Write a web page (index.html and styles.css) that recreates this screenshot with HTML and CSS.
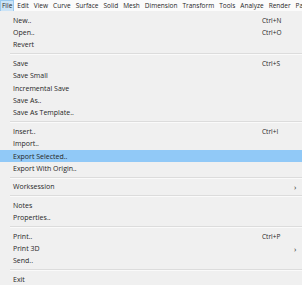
FILE: index.html
```html
<!DOCTYPE html>
<html>
<head>
  <meta charset="utf-8">
  <link rel="stylesheet" href="styles.css">
</head>
<body>
<div id="app">
  <div class="menubar">
    <span class="top active">File</span>
    <span class="top">Edit</span>
    <span class="top">View</span>
    <span class="top">Curve</span>
    <span class="top">Surface</span>
    <span class="top">Solid</span>
    <span class="top">Mesh</span>
    <span class="top">Dimension</span>
    <span class="top">Transform</span>
    <span class="top">Tools</span>
    <span class="top">Analyze</span>
    <span class="top">Render</span>
    <span class="top">Panel</span>
  </div>
  <div class="menu">
    <div class="item"><span class="label">New..</span><span class="key">Ctrl+N</span></div>
    <div class="item"><span class="label">Open..</span><span class="key">Ctrl+O</span></div>
    <div class="item"><span class="label">Revert</span></div>
    <div class="sep"></div>
    <div class="item"><span class="label">Save</span><span class="key">Ctrl+S</span></div>
    <div class="item"><span class="label">Save Small</span></div>
    <div class="item"><span class="label">Incremental Save</span></div>
    <div class="item"><span class="label">Save As..</span></div>
    <div class="item"><span class="label">Save As Template..</span></div>
    <div class="sep"></div>
    <div class="item"><span class="label">Insert..</span><span class="key">Ctrl+I</span></div>
    <div class="item"><span class="label">Import..</span></div>
    <div class="item selected"><span class="label">Export Selected..</span></div>
    <div class="item"><span class="label">Export With Origin..</span></div>
    <div class="sep"></div>
    <div class="item"><span class="label">Worksession</span><span class="arrow">&rsaquo;</span></div>
    <div class="sep"></div>
    <div class="item"><span class="label">Notes</span></div>
    <div class="item"><span class="label">Properties..</span></div>
    <div class="sep"></div>
    <div class="item"><span class="label">Print..</span><span class="key">Ctrl+P</span></div>
    <div class="item"><span class="label">Print 3D</span><span class="arrow">&rsaquo;</span></div>
    <div class="item"><span class="label">Send..</span></div>
    <div class="sep"></div>
    <div class="item"><span class="label">Exit</span></div>
  </div>
</div>
</body>
</html>
```

FILE: styles.css
```css
body, html {
  margin: 0;
  height: 100%;
  overflow: hidden;
}

#app {
  font-family: "Open Sans", sans-serif;
  color: #262626;
  background-color: #f0f0f0;
  height: 100%;
}

.menubar {
  display: flex;
  height: 11px;
  align-items: center;
  background-color: #fbfbfb;
  font-size: 6.5px;
  white-space: nowrap;
  overflow: hidden;
  gap: 3px;
  padding-left: 1px;
}

.top {
  padding: 0 1px;
  line-height: 10px;
}

.top.active {
  background-color: #cce4f7;
  outline: 1px solid #99c9ef;
}

.menu {
  padding-top: 3px;
  font-size: 7px;
}

.item {
  display: flex;
  align-items: center;
  height: 12.4px;
  padding-left: 13px;
}

.item .label {
  flex: 1;
}

.item .key {
  width: 40px;
  font-size: 6.5px;
}

.item .arrow {
  width: 8px;
  font-size: 8px;
}

.selected {
  background-color: #91c9f7;
}

.sep {
  height: 1px;
  margin: 2px 0 2px 10px;
  background-color: #dcdcdc;
  border-bottom: 1px solid #fafafa;
}
```
